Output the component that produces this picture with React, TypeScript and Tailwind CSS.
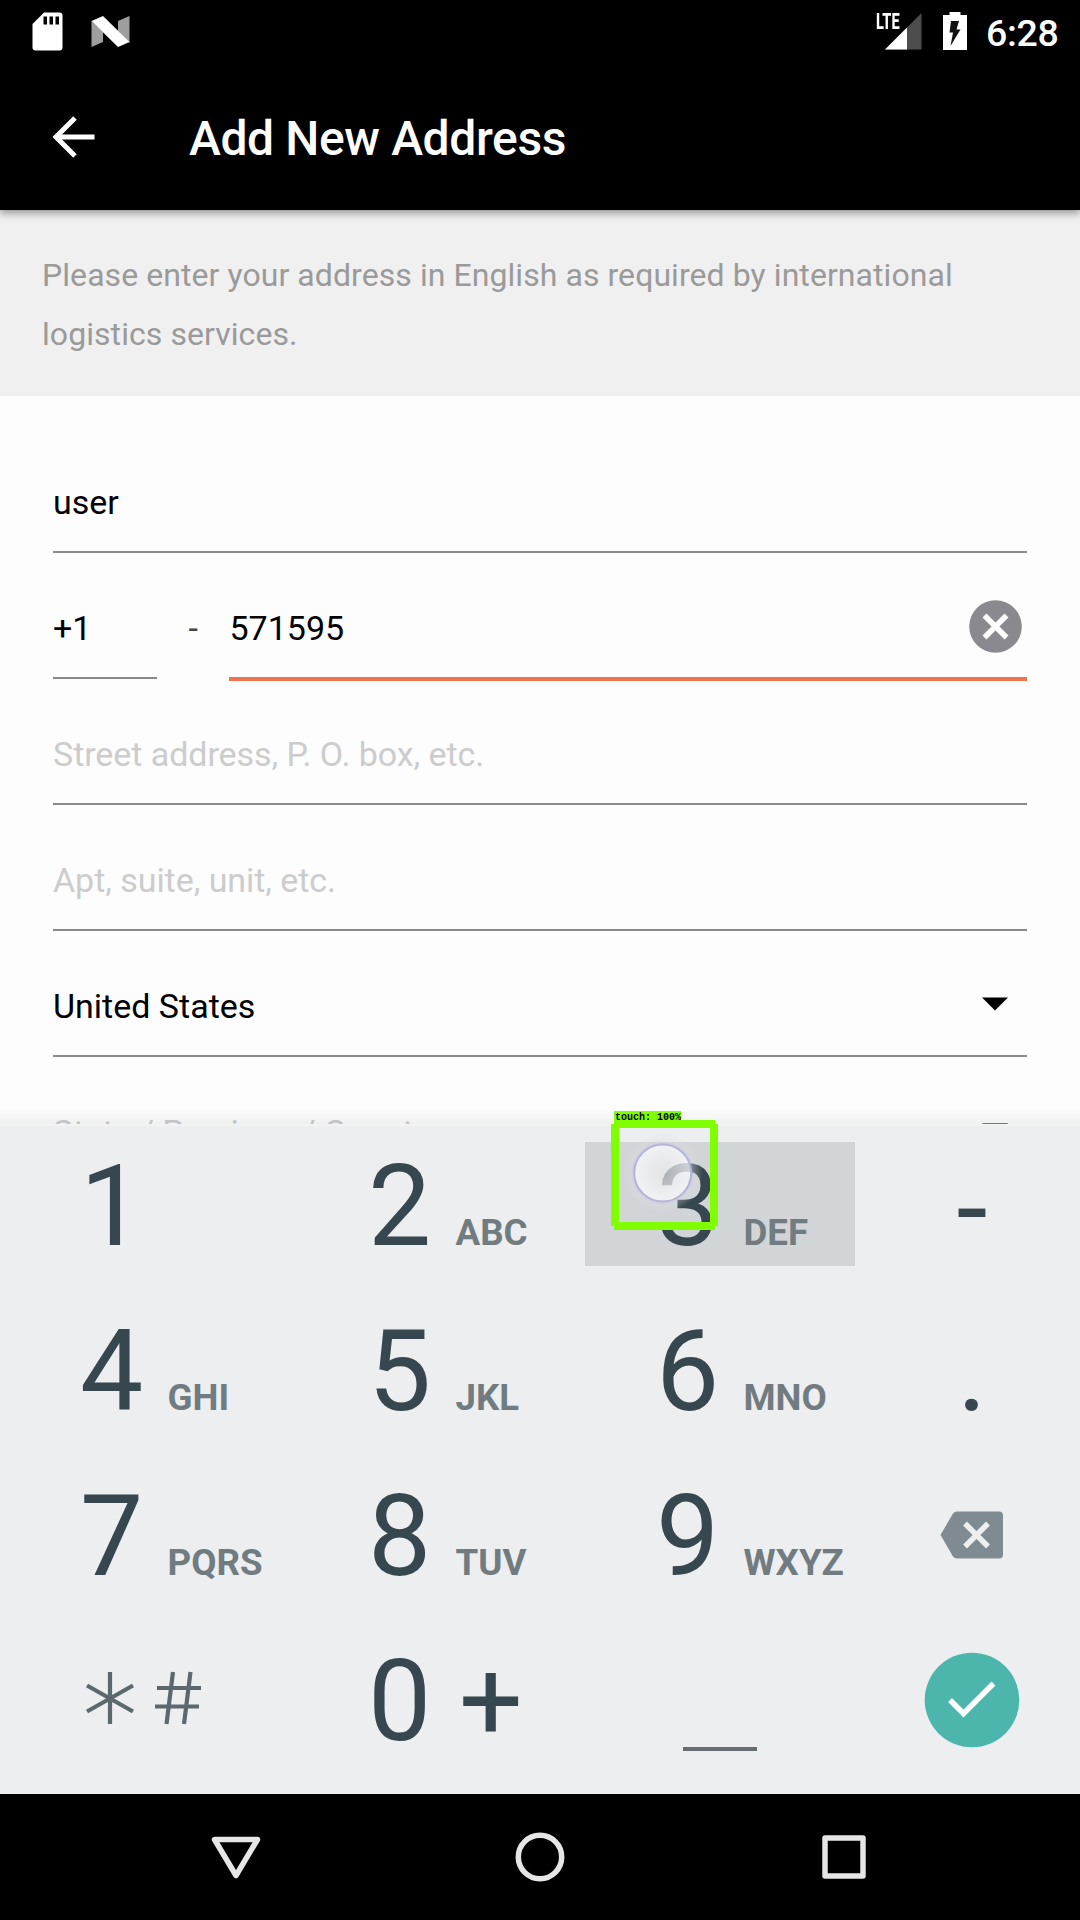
import React from "react";

function StatusBar() {
  return (
    <div className="flex h-[63px] items-start bg-black text-white">
      <svg className="ml-[32px] mt-[12px]" width="31" height="39" viewBox="0 0 31 39">
        <path d="M12 .5H27.500Q30.500.5 30.500 3.500V35.500Q30.500 38.500 27.500 38.500H3.500Q.5 38.500.5 35.500V12Z" fill="#fff" />
        <path d="M11.500 4.500h3.500v8h-3.500zM17.500 4.500h3.500v8h-3.500zM23.500 4.500h3.500v8h-3.500z" fill="#000" />
      </svg>
      <svg className="ml-[28px] mt-[16px]" width="39" height="31" viewBox="0 0 39 31">
        <path d="M.5 5L12 16V26L.5 31Z" fill="#9e9e9e" />
        <path d="M38.500 0L27 5V15L38.500 27Z" fill="#9e9e9e" />
        <path d="M.5 5L12 0L38.500 26L27 31Z" fill="#fff" />
      </svg>
      <div className="relative ml-[746px] mt-[12px] h-[38px] w-[46px]">
        <svg width="46" height="38" viewBox="0 0 46 38">
          <path d="M45.500 1V37.500H9Z" fill="#4d4d4d" />
          <path d="M31 15.500V37.500H9Z" fill="#fff" />
        </svg>
        <span className="absolute left-0 top-px inline-block origin-left scale-x-[0.66] text-[22px] font-extrabold leading-[18px]">LTE</span>
      </div>
      <svg className="ml-[21px] mt-[12px]" width="24" height="38" viewBox="0 0 24 38">
        <path d="M6.500 0H17.500V3H24V38H0V3H6.500Z" fill="#fff" />
        <path d="M8 9H16L13.500 17.500H17.500L7.500 34L10 20.500H6.500Z" fill="#111" />
      </svg>
      <span className="ml-[19px] mt-[9px] text-[37.500px] font-medium leading-[48px] tracking-[-0.3px]">6:28</span>
    </div>
  );
}

function Header() {
  return (
    <div className="relative z-10 flex h-[147px] items-center bg-black text-white shadow-[0_3px_8px_rgba(0,0,0,0.4)]">
      <svg className="ml-[52px]" width="44" height="44" viewBox="0 0 44 44" fill="none" stroke="#fff" strokeWidth="5">
        <path d="M42.500 22H5M23 3L4 22L23 41" />
      </svg>
      <h1 className="ml-[93px] mt-[5px] text-[48px] font-medium leading-[60px] tracking-[-0.38px]">Add New Address</h1>
    </div>
  );
}

function Caret() {
  return (
    <svg className="absolute right-[19px] top-[66px]" width="26" height="14" viewBox="0 0 26 14">
      <path d="M0 .5H26L13 13.500Z" fill="#000" />
    </svg>
  );
}

function Field({ text, hint, caret }: { text: string; hint?: boolean; caret?: boolean }) {
  return (
    <div className="relative h-[126px] shrink-0 border-b-2 border-[#8a8a8a] pl-[0.5px] pt-[50px] leading-[50px]">
      <span className={hint ? "tracking-[-0.06px] text-[#cccccc]" : "text-black"}>{text}</span>
      {caret && <Caret />}
    </div>
  );
}

function AddressForm() {
  return (
    <div className="relative flex h-[728px] flex-col overflow-hidden bg-[#fdfdfd] pl-[52.500px] pr-[53.500px] pt-[31px] text-[34px]">
      <Field text="user" />
      <div className="flex h-[126px] shrink-0 leading-[50px]">
        <div className="w-[104.500px] border-b-2 border-[#8a8a8a] pl-[0.5px] pt-[50px]">+1</div>
        <div className="w-[72px] pl-[31.500px] pt-[50px] text-[#444]">-</div>
        <div className="relative mb-[-2px] flex-1 border-b-4 border-[#f07450] pl-[0.5px] pt-[50px]">
          571595
          <svg className="absolute right-[5px] top-[47px]" width="53" height="53" viewBox="0 0 53 53">
            <circle cx="26.500" cy="26.500" r="26.300" fill="#8a898f" />
            <path d="M15.500 15.500L37.500 37.500M37.500 15.500L15.500 37.500" stroke="#fff" strokeWidth="5.500" />
          </svg>
        </div>
      </div>
      <Field text="Street address, P. O. box, etc." hint />
      <Field text="Apt, suite, unit, etc." hint />
      <Field text="United States" caret />
      <Field text="State / Province / County" hint caret />
      <div className="absolute inset-x-0 bottom-0 h-[16px] bg-linear-to-b from-transparent to-[#1e28320f]" />
    </div>
  );
}

function Key({ digit, letters, pressed }: { digit: string; letters?: string; pressed?: boolean }) {
  return (
    <div className={`flex h-[124px] items-baseline pl-[71px] ${pressed ? "bg-[#d2d5d8]" : ""}`}>
      <span className="w-[87.500px] text-[112.500px] leading-[130px]">{digit}</span>
      <span className="text-[36.700px] font-bold text-[#717c80]">{letters}</span>
    </div>
  );
}

function TouchMarker() {
  return (
    <div className="absolute left-[611px] top-[-15px] h-[119px] w-[107px]">
      <svg className="absolute left-[8px] top-[17px]" width="92" height="94" viewBox="0 0 92 94">
        <defs>
          <radialGradient id="glow">
            <stop offset="0.700" stopColor="#b9badf" stopOpacity="0.600" />
            <stop offset="0.800" stopColor="#dcdde6" stopOpacity="0.300" />
            <stop offset="1" stopColor="#dcdde6" stopOpacity="0" />
          </radialGradient>
          <radialGradient id="disc">
            <stop offset="0" stopColor="#eeeef0" stopOpacity="0.620" />
            <stop offset="1" stopColor="#fafafc" stopOpacity="0.780" />
          </radialGradient>
          <mask id="ring">
            <rect width="92" height="94" fill="#fff" />
            <circle cx="43.700" cy="45" r="28.500" fill="#000" />
          </mask>
        </defs>
        <circle cx="43.700" cy="45" r="40" fill="url(#glow)" mask="url(#ring)" />
        <circle cx="43.700" cy="45" r="28.500" fill="url(#disc)" stroke="#b3b5da" strokeWidth="2" />
      </svg>
      <div className="absolute left-0 top-[13px] h-[102px] w-[107px] border-x-8 border-[#80ff00]" />
      <div className="absolute left-[3px] top-[9px] h-[110px] w-[101px] border-y-8 border-[#80ff00]" />
      <div className="absolute left-[3px] top-0 h-[12px] w-[67px] bg-[#80ff00] pl-px font-['Liberation_Mono'] text-[10px] font-bold leading-[13px] text-black">touch: 100%</div>
    </div>
  );
}

function Keyboard() {
  return (
    <div className="relative h-[670px] border-t-2 border-[#f2f3f4] bg-[#eceef0] text-[#37474f]">
      <div className="grid grid-cols-[270px_270px_270px_198px] gap-x-[18px] gap-y-[41px] pl-[9px] pt-[16px]">
        <Key digit="1" />
        <Key digit="2" letters="ABC" />
        <Key digit="3" letters="DEF" pressed />
        <div className="h-[124px] text-center text-[112.500px] leading-[134px]">-</div>

        <Key digit="4" letters="GHI" />
        <Key digit="5" letters="JKL" />
        <Key digit="6" letters="MNO" />
        <div className="h-[124px] text-center text-[112.500px] leading-[130px]">.</div>

        <Key digit="7" letters="PQRS" />
        <Key digit="8" letters="TUV" />
        <Key digit="9" letters="WXYZ" />
        <div className="flex h-[124px] items-center justify-center">
          <svg className="mt-[1px]" width="64" height="48" viewBox="0 0 64 48">
            <path d="M17 .5H59Q63 .5 63 4.500V43.500Q63 47.500 59 47.500H17Q14.500 47.500 13 45.500L.5 24L13 2.500Q14.500.5 17 .5Z" fill="#7f8b90" />
            <path d="M25 12.500L48 35.500M48 12.500L25 35.500" stroke="#eceef0" strokeWidth="5.500" />
          </svg>
        </div>

        <div className="flex h-[124px] items-start pl-[77px] pt-[34px]">
          <svg width="48" height="54" viewBox="0 0 48 54" stroke="#5b686e" strokeWidth="4.200">
            <path d="M24 1V53M1 14.500L47 40.500M47 14.500L1 40.500" />
          </svg>
          <svg className="ml-[20px]" width="48" height="54" viewBox="0 0 48 54" stroke="#5b686e" strokeWidth="4.200">
            <path d="M19 1L12.500 53M36.500 1L30 53M3 17H47M1 35.500H45" />
          </svg>
        </div>
        <div className="flex h-[124px] items-baseline pl-[71px] text-[112.500px] leading-[130px]">
          <span className="w-[91px]">0</span>
          <span>+</span>
        </div>
        <div className="h-[124px] pl-[98px] pt-[110px]">
          <div className="h-[4px] w-[74px] bg-[#646e73]" />
        </div>
        <div className="flex h-[124px] items-center justify-center">
          <svg className="mt-[2px]" width="96" height="96" viewBox="0 0 96 96">
            <circle cx="48" cy="48" r="47.300" fill="#4db6ac" />
            <path d="M26 48L39.500 61.500L69.500 31.500" fill="none" stroke="#fff" strokeWidth="5.500" />
          </svg>
        </div>
      </div>
      <TouchMarker />
    </div>
  );
}

function NavBar() {
  return (
    <div className="flex h-[126px] items-center bg-black pl-[211px]">
      <svg width="50" height="50" viewBox="0 0 50 50" fill="none" stroke="#e6e6e6" strokeWidth="5.500" strokeLinejoin="round">
        <path d="M3.500 7.500H46.500L25 43.500Z" />
      </svg>
      <svg className="ml-[254px]" width="50" height="50" viewBox="0 0 50 50" fill="none" stroke="#e6e6e6" strokeWidth="5.500">
        <circle cx="25" cy="25" r="21.700" />
      </svg>
      <svg className="ml-[254px]" width="50" height="50" viewBox="0 0 50 50" fill="none" stroke="#e6e6e6" strokeWidth="5.500" strokeLinejoin="round">
        <rect x="6" y="6" width="38" height="38" />
      </svg>
    </div>
  );
}

export default function App() {
  return (
    <div className="h-[1920px] w-[1080px] overflow-hidden bg-black font-[Roboto,sans-serif] text-black">
      <StatusBar />
      <Header />
      <div className="h-[186px] bg-[#f0f0f0] px-[42px] pt-[36px] text-[32px] leading-[59px] tracking-[0.065px] text-[#9a9a9a]">
        Please enter your address in English as required by international logistics services.
      </div>
      <AddressForm />
      <Keyboard />
      <NavBar />
    </div>
  );
}
